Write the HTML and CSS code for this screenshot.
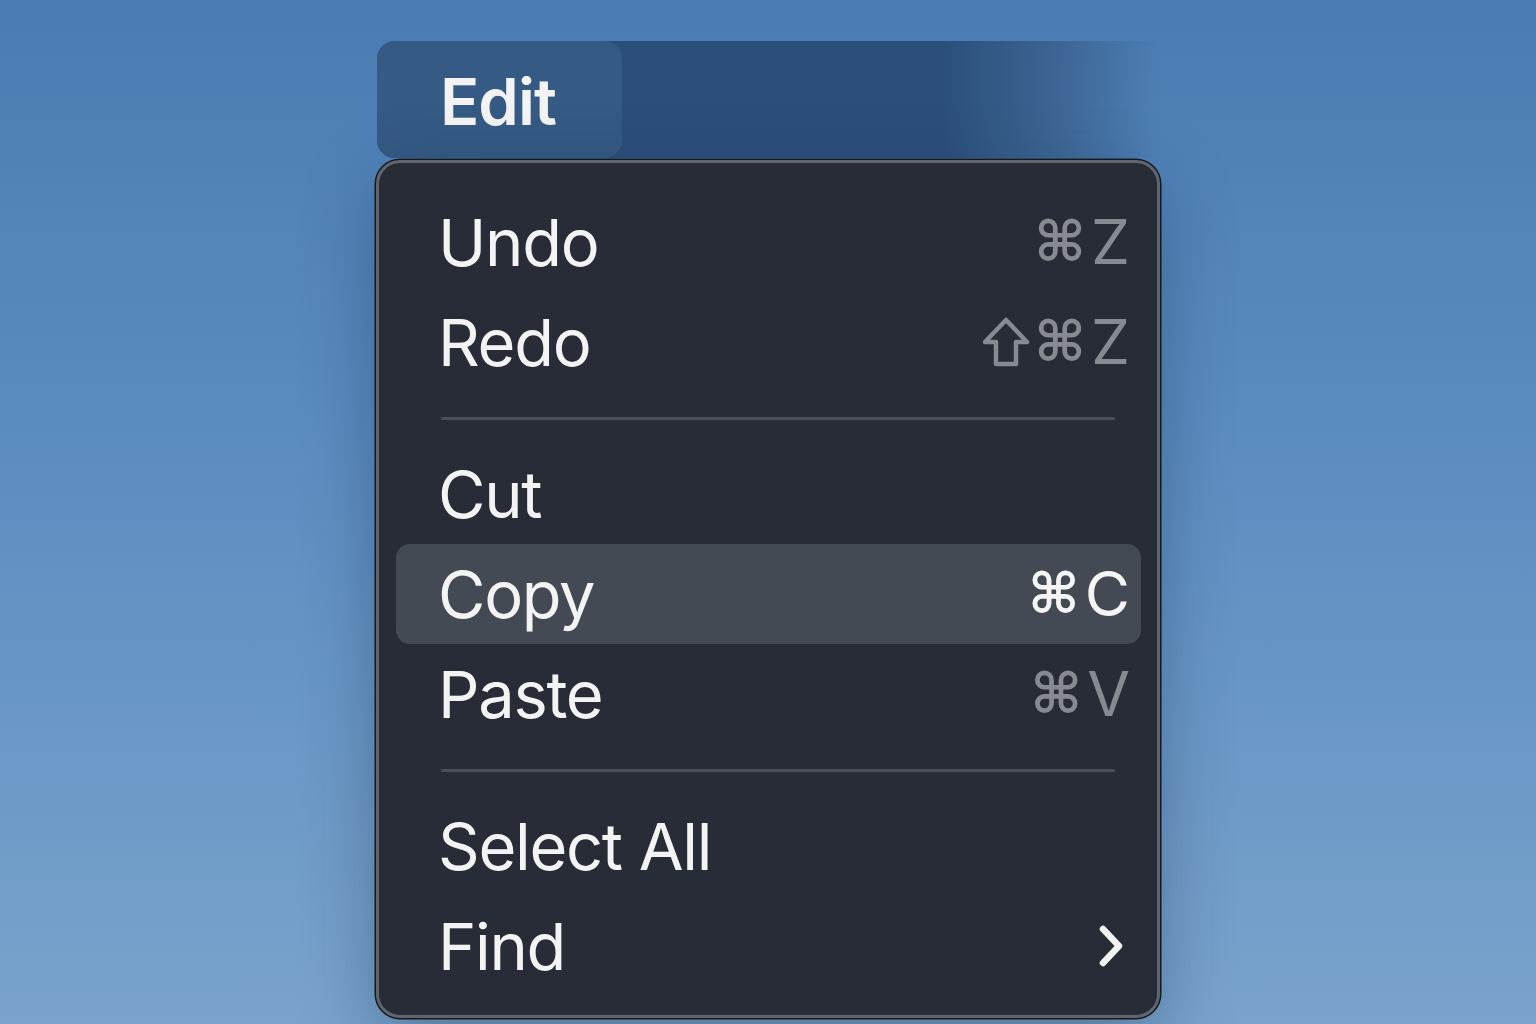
FILE: index.html
```html
<!DOCTYPE html>
<html lang="en">
<head>
<meta charset="utf-8">
<title>Edit menu</title>
<link rel="stylesheet" href="styles.css">
</head>
<body>
<div class="stage">
  <div class="menubar">
    <div class="menubar-item">Edit</div>
  </div>
  <div class="menu">
    <div class="item"><span class="label">Undo</span><span class="key"><span class="cmd">⌘</span>Z</span></div>
    <div class="item"><span class="label">Redo</span><span class="key"><svg class="shift" width="48" height="50" viewBox="0 0 48 50"><path d="M24 3 L45 25 L34 25 L34 47 L14 47 L14 25 L3 25 Z" fill="none" stroke="#878a91" stroke-width="4.5" stroke-linejoin="round"/></svg><span class="cmd">⌘</span>Z</span></div>
    <div class="sep"></div>
    <div class="item"><span class="label">Cut</span></div>
    <div class="item active"><span class="label">Copy</span><span class="key"><span class="cmd">⌘</span>C</span></div>
    <div class="item"><span class="label">Paste</span><span class="key"><span class="cmd">⌘</span>V</span></div>
    <div class="sep"></div>
    <div class="item"><span class="label">Select All</span></div>
    <div class="item"><span class="label">Find</span>
      <svg class="chev" width="30" height="44" viewBox="0 0 30 44"><path d="M9 5 L25 22 L9 39" fill="none" stroke="#f2f2f2" stroke-width="6.5" stroke-linecap="round" stroke-linejoin="round"/></svg>
    </div>
  </div>
</div>
</body>
</html>
```
FILE: styles.css
```css
html, body {
  margin: 0;
  height: 100%;
}
body {
  width: 1536px;
  height: 1024px;
  overflow: hidden;
  background: linear-gradient(to bottom, #4a7cb3 0%, #5a8bc0 40%, #79a3cc 100%);
  font-family: "Inter", "Noto Sans", "DejaVu Sans", sans-serif;
  color: #f3f3f3;
}
.stage {
  display: flex;
  flex-direction: column;
  padding: 41px 0 0 377px;
}
.menubar {
  width: 783px;
  height: 117px;
  border-radius: 18px 0 0 18px;
  background: linear-gradient(to right, #2b4f79 0%, #2b4f79 72%, rgba(52, 88, 130, 0.6) 88%, rgba(75, 125, 180, 0) 100%);
  display: flex;
}
.menubar-item {
  width: 245px;
  height: 117px;
  box-sizing: border-box;
  padding: 5px 0 0 63px;
  border-radius: 18px;
  background: #355a83;
  font-size: 65px;
  font-weight: 600;
  line-height: 112px;
  letter-spacing: -1px;
}
.menu {
  width: 784px;
  box-sizing: border-box;
  margin: 2px 0 0 -1px;
  padding: 29px 16px 19px 17px;
  background: #272c36;
  border: 3px solid #61656d;
  border-radius: 24px;
  box-shadow: 0 0 0 1.5px #16191e, 0 24px 70px rgba(20, 40, 70, 0.35);
  display: flex;
  flex-direction: column;
}
.item {
  height: 100px;
  display: flex;
  align-items: center;
  justify-content: space-between;
  padding: 0 11px 0 42px;
  border-radius: 14px;
}
.item.active {
  background: #434a54;
}
.label {
  font-size: 65px;
  font-weight: 400;
  letter-spacing: -1.3px;
  line-height: 1;
}
.key {
  display: flex;
  align-items: center;
  gap: 5px;
  font-size: 62px;
  color: #878a91;
  line-height: 1;
}
.item.active .key {
  color: #f5f5f5;
}
.cmd {
  font-family: "DejaVu Sans", sans-serif;
  font-size: 56px;
  font-weight: 700;
}
.shift {
  display: block;
  margin-right: -1px;
}
.chev {
  display: block;
  margin-right: 6px;
}
.sep {
  height: 52px;
  display: flex;
  align-items: center;
  padding: 0 26px 0 45px;
}
.sep::before {
  content: "";
  flex: 1;
  height: 3px;
  border-radius: 2px;
  background: #4a4f59;
}
```
